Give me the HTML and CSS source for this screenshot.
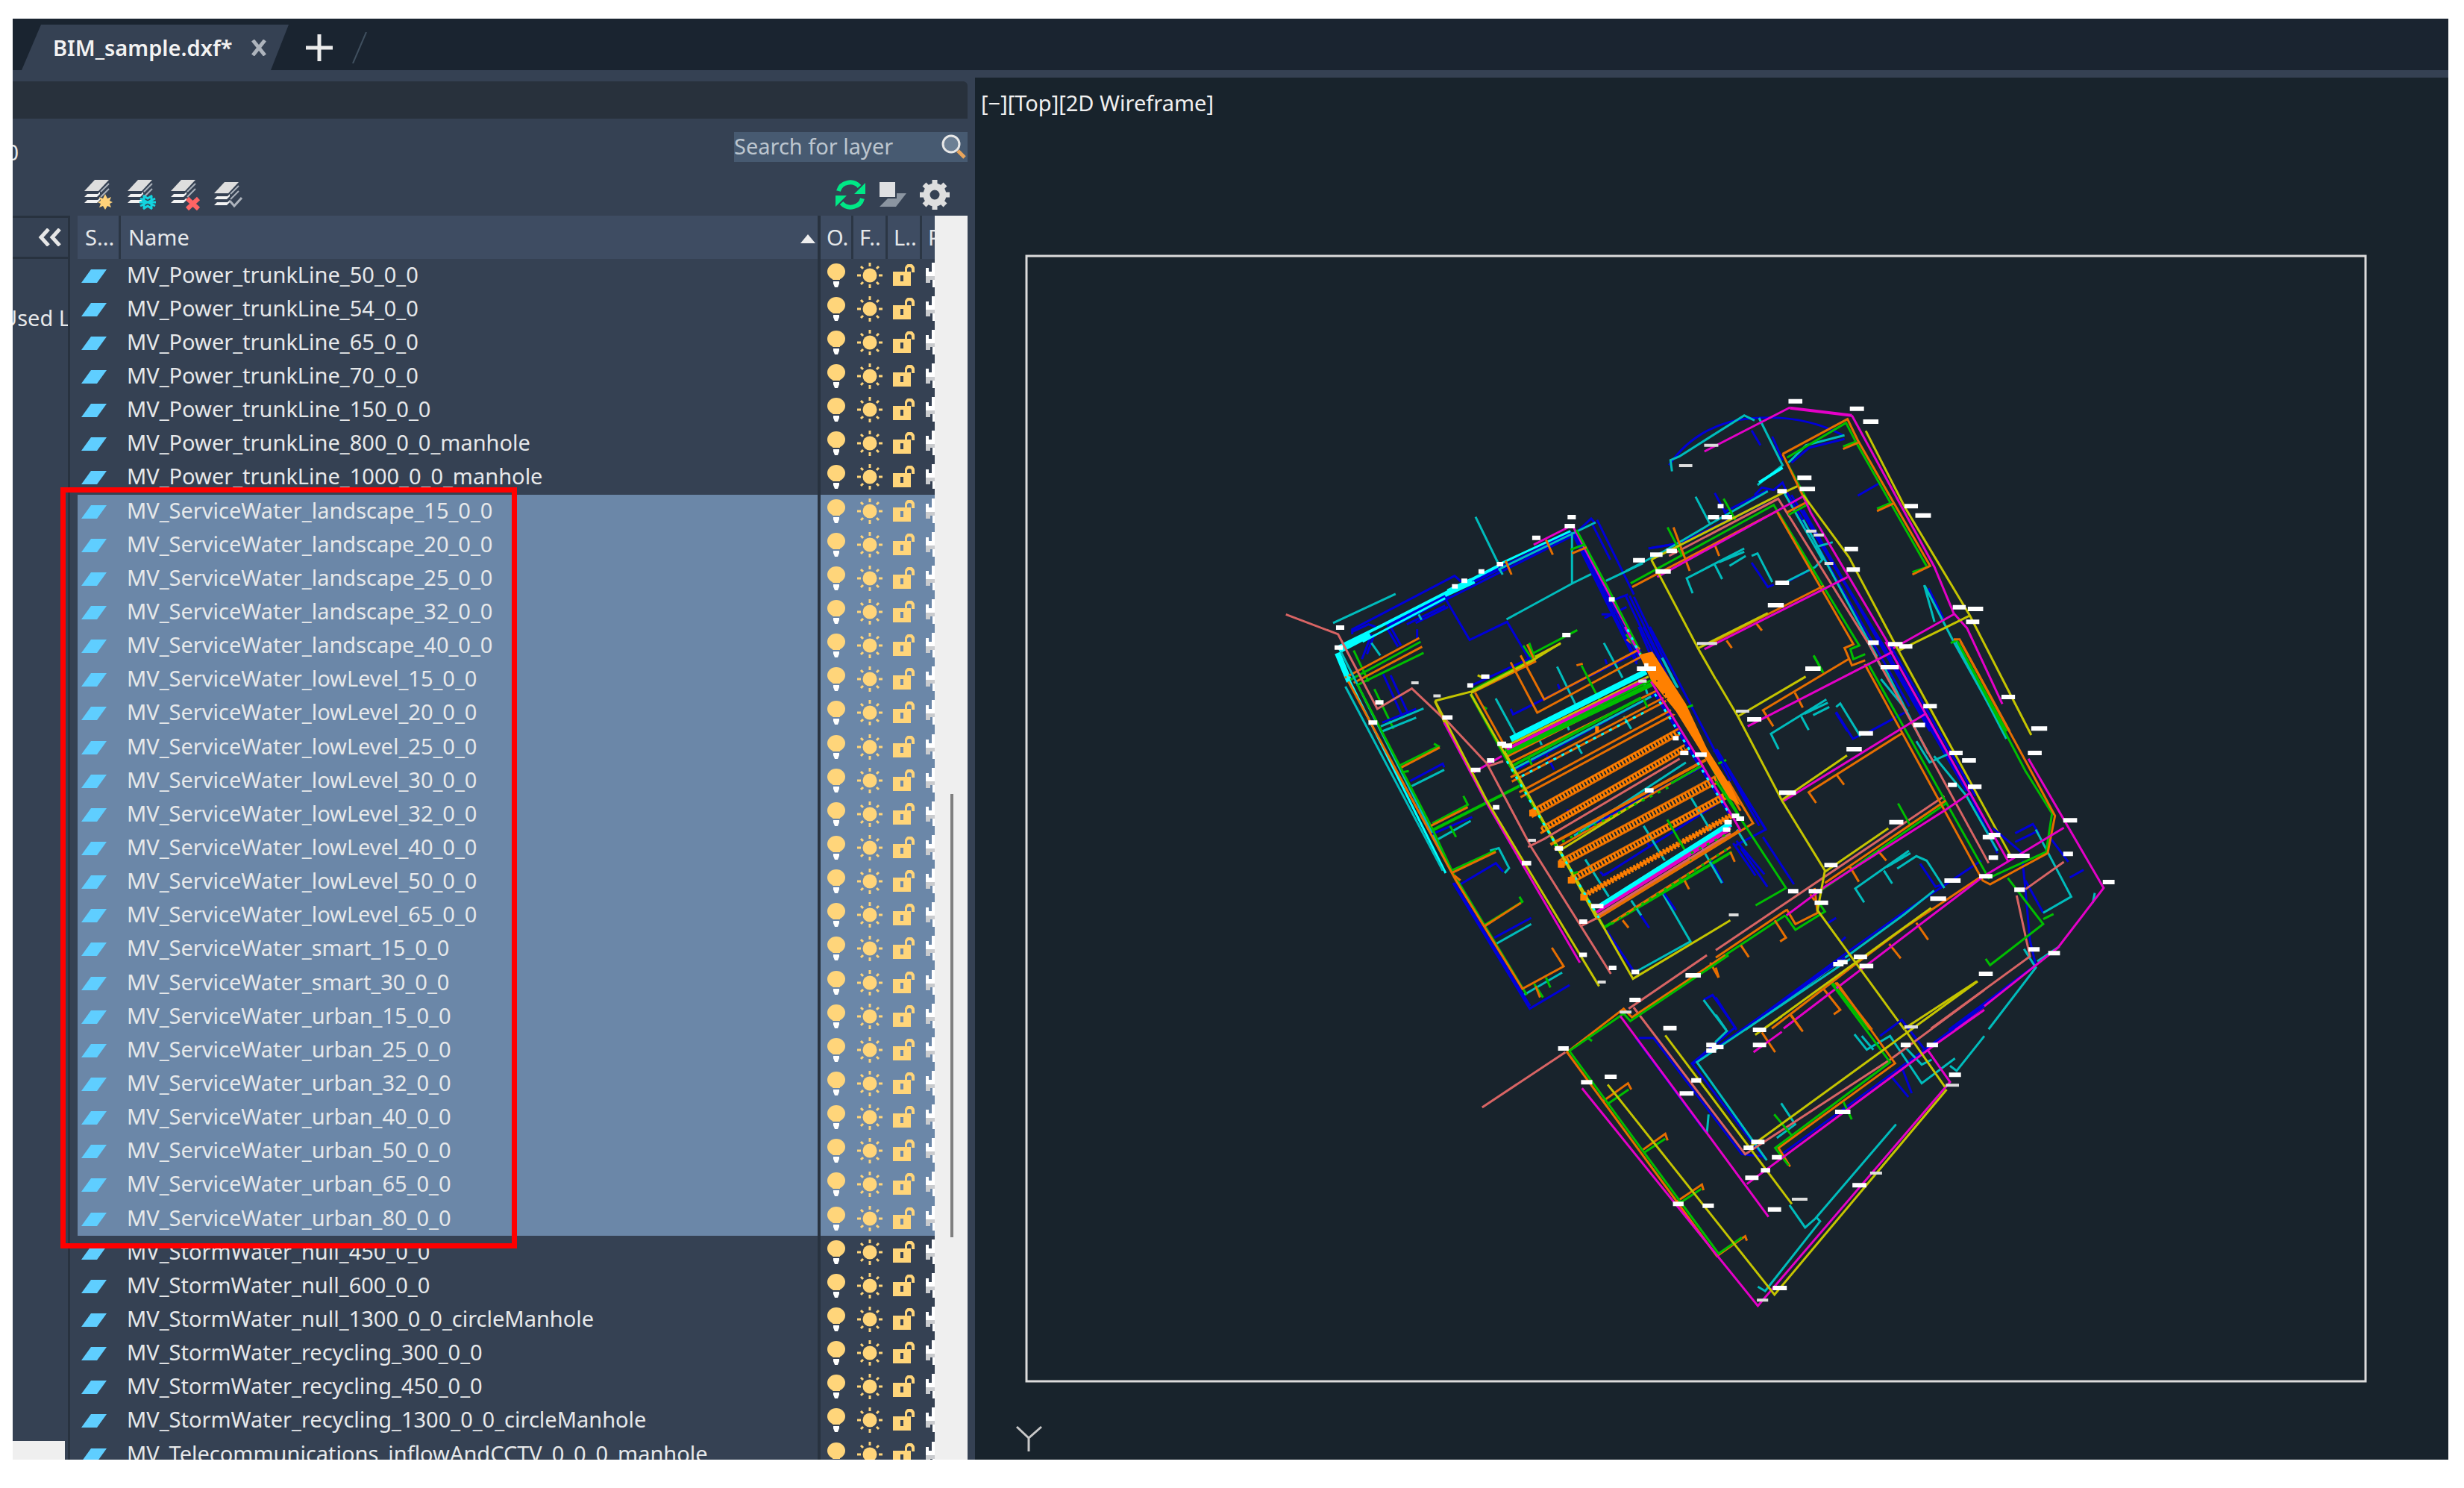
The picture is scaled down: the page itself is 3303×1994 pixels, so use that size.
FILE: index.html
```html
<!DOCTYPE html>
<html lang="en">
<head>
<meta charset="utf-8">
<title>BIM_sample.dxf</title>
<link rel="stylesheet" href="styles.css">
</head>
<body>
<svg class="sprite" aria-hidden="true">
  <symbol id="status" viewBox="0 0 34 18"><path d="M13 0H34L21 18H0Z" fill="#5fceff"/></symbol>
  <symbol id="bulb" viewBox="0 0 26 34"><path d="M8 20H18V23H8Z" fill="#ffd57a"/><ellipse cx="13" cy="12" rx="12" ry="11" fill="#ffd57a"/><path d="M9 25h8v3l-2 5h-4l-2-5Z" fill="#fff"/></symbol>
  <symbol id="sun" viewBox="0 0 34 34"><circle cx="17" cy="17" r="9.5" fill="#ffd57a"/><path d="M17 0v5M17 29v5M0 17h5M29 17h5M5 5l3 3M26 26l3 3M29 5l-3 3M8 26l-3 3" stroke="#ffd57a" stroke-width="3"/></symbol>
  <symbol id="lock" viewBox="0 0 29 30"><path d="M0 10H16V6a6 6 0 0 1 13 0v5h-4V7a3 3 0 0 0-6 0v3h5V29H0ZM10 15v8h4v-8Z" fill="#ffd57a" fill-rule="evenodd"/></symbol>
  <symbol id="plot" viewBox="0 0 34 34"><path d="M8 0H26V9H34V19H0V7H4V12H8Z" fill="#fff"/><path d="M0 18H34V27H28V23H6V27H0Z" fill="#c9cbce"/><path d="M9 23H25V33H9Z" fill="#fff"/></symbol>
  <symbol id="layers" viewBox="0 0 40 42"><path d="M14 1H33L19 16H0Z" fill="#dedede"/><path d="M4 20H18L21 17V20L17 24H0ZM4 28H18L21 25V28L17 32H0Z" fill="#f2f2f2"/><path d="M22 17 33 6M22 24 33 13" stroke="#aab1bb" stroke-width="2"/></symbol>
</svg>

<main class="app">
  <nav class="tabs">
    <div class="tab">
      <svg class="tab-shape" viewBox="0 0 358 61" preserveAspectRatio="none" aria-hidden="true"><path d="M26 0H358L334 61H0Z" fill="#354153"/></svg>
      <a href="#" class="tab-name">BIM_sample.dxf*</a>
      <button class="tab-close" aria-label="Close"><svg width="22" height="22"><path d="M3 1 19 21M19 1 3 21" stroke="#aeb4bd" stroke-width="5"/></svg></button>
    </div>
    <button class="tab-new" aria-label="New tab"><svg width="36" height="36"><path d="M18 0V36M0 18H36" stroke="#ececec" stroke-width="5"/></svg></button>
    <svg class="tab-end" width="20" height="42" aria-hidden="true"><path d="M19 0 1 42" stroke="#40505f" stroke-width="2"/></svg>
  </nav>

  <div class="work">
    <section class="palette">
      <header class="palette-title"></header>
      <div class="search-row">
        <span class="current">0</span>
        <label class="search"><input type="text" placeholder="Search for layer" aria-label="Search for layer">
          <svg width="34" height="34" aria-hidden="true"><circle cx="14" cy="13" r="11" fill="#6c7f94" stroke="#e8e8e8" stroke-width="3"/><path d="M23 22 32 31" stroke="#e9a55c" stroke-width="5"/></svg>
        </label>
      </div>
      <div class="tools">
        <button aria-label="New layer"><svg width="40" height="42"><use href="#layers"/><path d="M28 20l3 6 5-2-2 5 4 2-4 2 2 5-5-2-3 5-3-5-5 2 2-5-4-2 4-2-2-5 5 2Z" fill="#ffd27a"/></svg></button>
        <button aria-label="New frozen layer"><svg width="40" height="42"><use href="#layers"/><path d="M22 22V40M32 22V40M17 26 37 36M37 26 17 36M16 31H38M21 22 27 26 33 22M21 40 27 36 33 40" fill="none" stroke="#12d4e0" stroke-width="3"/></svg></button>
        <button aria-label="Delete layer"><svg width="40" height="42"><use href="#layers"/><path d="M22 26 37 40M37 26 22 40" stroke="#ff6464" stroke-width="6"/></svg></button>
        <button aria-label="Set current"><svg width="40" height="42"><g transform="translate(0 3)"><use href="#layers"/></g><path d="M21 29 27 36 37 25" fill="none" stroke="#aeb4bd" stroke-width="3"/></svg></button>
        <span class="spring"></span>
        <button aria-label="Refresh"><svg width="42" height="40"><path d="M5 15A16 15 0 0 1 33 9M37 25A16 15 0 0 1 9 31" fill="none" stroke="#00e886" stroke-width="6"/><path d="M41 4V19H26ZM1 36V21H16Z" fill="#00e886"/></svg></button>
        <button aria-label="Layer states"><svg width="36" height="40"><path d="M23 18H36L22 36H0L11 25H23Z" fill="#8b95a1"/><path d="M0 3H21V23H0Z" fill="#dfe0e2"/></svg></button>
        <button aria-label="Settings"><svg width="40" height="40"><circle cx="20" cy="20" r="11" fill="none" stroke="#dedede" stroke-width="9"/><path d="M20 0V8M20 32V40M0 20H8M32 20H40M6 6 11 11M29 29 34 34M34 6 29 11M11 29 6 34" stroke="#dedede" stroke-width="7"/></svg></button>
      </div>

      <div class="lists">
        <aside class="filters">
          <div class="filters-head"><button aria-label="Collapse"><svg width="32" height="24"><path d="M14 1 4 12 14 23M29 1 19 12 29 23" fill="none" stroke="#e6e6e6" stroke-width="5"/></svg></button></div>
          <div class="filters-body">Used L</div>
          <div class="filters-scroll"></div>
        </aside>
        <div class="layers">
          <table>
            <colgroup><col class="c-status"><col><col class="c-on"><col class="c-mid"><col class="c-mid"><col class="c-plot"></colgroup>
            <thead><tr><th>S...</th><th>Name<svg class="sort" width="20" height="12" aria-hidden="true"><path d="M10 0 20 12H0Z" fill="#eee"/></svg></th><th>O.</th><th>F..</th><th>L..</th><th>P</th></tr></thead>
            <tbody id="rows"></tbody>
          </table>
          <div class="callout"></div>
        </div>
        <div class="scrollbar"><div class="thumb"></div></div>
      </div>
    </section>

    <section class="viewport">
      <div class="view-label">[−][Top][2D Wireframe]</div>
      <svg class="drawing" viewBox="1307 104 1975 1852" preserveAspectRatio="xMinYMin meet" role="img" aria-label="Piping plan">
        <rect x="1376" y="343" width="1795" height="1508" fill="none" stroke="#dcdcdc" stroke-width="3"/>
        <path d="M1363 1912 1379 1927 1396 1912M1379 1927V1945" fill="none" stroke="#c8c8c8" stroke-width="3"/>

        <!-- north-west wing -->
        <g transform="translate(1700 500) scale(.3954 .3333)">
          <path class="b" d="M285 1050V1030L632 815 655 840M410 1000 1030 640M420 1020 1030 655M600 905 683 1073 810 1000 885 1150M500 1005 610 940M1045 640 1095 585 1110 605M1115 590 1240 890M1100 610 1160 750M1030 640 1250 1170M1045 650 1260 1150M1210 890 1310 1140M1225 895 1330 1150M1240 900 1385 1260M1165 915 1220 890M1130 970H1175M1140 985 1215 940M1290 705 1390 685M350 1050 318 1150M360 1050 335 1130M390 1210 455 1380M405 1030 440 1100M415 1020 450 1095M415 1215 475 1370M505 1030V1075M470 1010 600 935M285 1040 340 1010 365 1020"/>
          <path class="b w3" d="M400 1012 610 892"/>
          <path class="b w2" d="M600 895 1030 645M1035 640 1250 1160"/>
          <path class="c" d="M220 1005 432 888M703 578 780 765M1030 640V845M808 990 1035 843 1095 808M1145 835 1270 765M350 1085 380 1135M510 970 520 992M785 790 795 810M780 790 1110 600M1335 1145 1385 1260"/>
          <path class="cb w2" d="M240 1100 380 1018M380 1018 780 775M600 895 700 840"/>
          <path class="cb" d="M780 770 1025 635M320 1080 600 905"/>
          <path class="cb w3" d="M240 1115 345 1050M235 1125 275 1240M610 880 690 835"/>
          <path class="m" d="M900 690 1025 615M1035 620 1260 1120"/>
          <path class="g" d="M1045 630 1150 860 1258 1110M290 1115 340 1240M275 1235 517 1080M300 1255 527 1125M360 1270 425 1430M900 1125 1048 1033M865 1095 895 1150M885 1085 905 1150M690 1275 890 1155M1025 710 1070 690"/>
          <path class="o" d="M1030 725 1080 700M942 670 965 730M805 755 825 810M260 1225 512 1065M290 1245 522 1100M878 1090 905 1160 690 1285M1215 1070 1260 1110"/>
          <path class="b" d="M690 1255 890 1145"/>
          <path class="y" d="M905 1140 990 1088M565 1318 690 1280 905 1150M565 1318 600 1410M710 1215 730 1225"/>
          <path class="s" d="M60 970 237 1050 370 1350 487 1268 600 1395"/>
        </g>

        <!-- north-east wing -->
        <g transform="translate(2180 500) scale(.3954 .3333)">
          <path class="b" d="M145 370C220 240 330 190 420 182C540 170 640 190 735 250M560 360 620 300 740 265M425 230 455 290M495 255 530 350M435 490 460 460 500 470 530 440 545 480M540 470 960 1340M560 490 900 1150M600 550 1030 1440M640 650 1045 1440M300 482 340 570M75 705 175 685M425 762 480 860 500 850M330 560 480 470M855 445 785 493M1025 865 1075 985M710 1365 750 1440M190 680 470 520M545 840 640 780"/>
          <path class="c" d="M155 395 150 350 180 335 400 170 435 190M450 180 530 370 445 450M550 360 610 290 740 250M530 470 665 750 640 780 540 840M0 795 130 715 280 610 480 475M235 497 283 605M225 885 205 825 400 705M300 770 325 828M315 760 400 718M350 775 405 735M425 735 445 725 495 840M600 590 850 1140M640 700 700 680M1010 852 1045 1000M1012 855 1075 1000 1110 1080 1280 1440"/>
          <path class="cb w2" d="M530 380 450 440"/>
          <path class="s" d="M145 735 515 505 820 1085"/>
          <path class="g" d="M15 845 500 530 790 1095 760 1110 770 1150 810 1130M545 340 745 200 780 280 1020 780 970 800M780 275 735 295M900 520 850 545M540 350 620 525 550 570M330 505 370 590M140 620 190 735M635 1135 665 1200M1100 1085 1120 1075 1290 1440"/>
          <path class="o" d="M20 860 510 555 770 1090 740 1105 765 1175 810 1155M530 325 750 185 785 270 1030 775 970 810M785 280 735 305M905 525 850 555M530 325 610 520 545 560M160 620 215 795M300 690 315 735M280 1090 670 855M440 1005 460 1035M340 1075 358 1105M1110 1070H1130L1300 1440"/>
          <path class="m" d="M265 315 555 138M765 170 1045 780 1110 965 1155 1025 1275 1330M105 820 510 555 600 495 625 560 900 1110M265 1110 750 820M900 1110 1110 970"/>
          <path class="m w2" d="M555 140 765 170"/>
          <path class="y" d="M812 232 945 540 1165 975 1373 1455M1165 975 925 1115M85 750 525 485 580 455M600 490 755 740 925 1120 1303 1940M85 750 245 1110 303 1230M245 1105 480 965"/>
        </g>

        <!-- west wing and courtyard -->
        <g transform="translate(1760 860) scale(.3954 .3333)">
          <path class="cb" d="M80 50 130 170 450 930"/>
          <path class="c" d="M95 40 470 925M110 180 440 920M335 580 445 515M415 800 535 720M600 840 630 830 665 910 650 930M620 1215 740 1135M715 1420 845 1330M230 340 375 268M235 360 350 305M1180 1000 1280 1205 1090 1330"/>
          <path class="b" d="M475 970 735 1475 870 1380M330 560 440 490 445 505M400 775 540 705M500 975 620 890 645 925M615 1190 740 1110M995 1160 1085 1320M1190 1010 1230 1080M1100 1080 1140 1150M1350 880 1390 970M1370 435 1535 755 1430 820M235 325 350 270M980 940 1000 930"/>
          <path class="b w2" d="M478 970 735 1465"/>
          <path class="g" d="M150 170 400 740 475 930 725 1420M290 500 425 420 410 410M405 730 525 655 510 620M470 920 620 838M580 1140 710 1045 700 1025M750 1375 780 1430M790 1350 805 1390M300 525 325 520M465 740 485 785M575 260 590 270"/>
          <path class="g w2" d="M405 758 700 580M535 210 660 480 985 1145M985 1150 1420 845"/>
          <path class="o" d="M120 160 485 960M485 960 710 1395 850 1305 810 1230M300 505 430 425M470 930 620 845M400 740 525 665M580 1145 705 1050M480 940 500 960M755 1385 770 1430M550 205 660 440M1050 1120 1070 1150M1260 960 1275 995M1415 845 1430 885"/>
          <path class="m" d="M445 325 590 650 905 1290M545 525 640 460"/>
          <path class="s" d="M440 300 590 490 740 825 1010 1335M595 500 645 480M905 1145 965 1110"/>
          <path class="y" d="M415 240 590 640 970 1385M535 205 745 75 840 5M535 210 1085 1355 1415 1120"/>
        </g>

        <!-- central plant room -->
        <g transform="translate(2000 840) scale(.3333)">
          <path class="b" d="M75 330 85 352 600 95M265 230 272 250M455 130 462 150M450 1000 900 715M435 985 450 1000M90 578 660 270M300 735 310 740M220 515 250 575M625 870 632 880M590 0 690 240M610 0 720 230M635 0 960 620M890 500 905 495 1075 800M970 870 1060 1000M880 950 925 1030M340 830 850 560"/>
          <path class="b w2" d="M540 20 600 130M650 260 960 760"/>
          <path class="c" d="M262 160 335 310M450 65 525 205M15 288 95 435M330 840 780 545M610 800 695 940M375 935 470 1085M797 680 880 820M685 125 748 245M90 570 640 280M530 360 560 410M335 465 362 510M610 220 625 270M290 365 310 415M180 430 200 475M985 815 1025 880M845 890 925 1030M560 1100 600 1160"/>
          <path class="o" d="M75 142 182 345 600 120M115 115 210 292 590 92M340 155 365 148M60 522 645 225M70 548 660 258M75 605 690 285M80 622 700 298M110 665 720 335M115 685 735 350M155 740 750 410M160 765 755 432M200 805 775 475M195 830 790 490M250 895 850 555M270 940 900 600M275 965 910 625M315 1005 945 665M320 1030 950 685M420 1165 1000 815M480 1190 960 885M420 1175 1050 790 950 620M960 640 1020 740M865 520 1000 740"/>
          <path class="o w2" d="M235 875 860 535M360 1085 960 760"/>
          <path class="hatch" d="M155 752 745 422M200 818 775 487M275 952 905 612M320 1017 945 675M360 1085 960 760"/>
          <path class="g" d="M360 155 445 320M50 500 640 215M60 512 645 235M705 775 800 940M780 325 808 315M910 550 942 535M870 540 1000 770M540 30 600 110M610 290 625 325M145 520 160 555M320 995 345 985M720 630 840 560"/>
          <path class="g w2" d="M60 505 640 228M80 560 600 285"/>
          <path class="y" d="M60 478 630 200M280 895 610 690M50 500 420 1170M440 1130 960 810"/>
          <path class="cb w3" d="M75 452 620 180M435 1125 960 792"/>
          <path class="m w2" d="M60 492 620 212M420 1148 950 820"/>
          <path class="m" d="M535 0 600 120M640 220 830 530 960 750 1000 820M430 1140 960 806"/>
          <path class="s" d="M215 850 755 530M425 1160 960 830M145 885 215 850"/>
          <path class="cb dots" d="M545 10 600 120M655 270 960 760M60 540 430 1170M120 600 610 345"/>
          <path class="g dots" d="M480 1195 960 885M800 910 960 825M250 880 720 640"/>
          <path fill="#ff8000" d="M592 112 645 100 780 310 865 490 960 640 1000 720 955 690 840 500 740 340 640 215Z"/>
          <path fill="#ff8000" d="M150 735H178V762H150ZM265 940H292V968H265ZM305 1005H335V1032H305ZM355 1078H380V1100H355ZM415 400H430V425H415Z"/>
          <path fill="#18232c" d="M660 215h6v5h-6ZM690 268h6v5h-6ZM700 285h5v6h-5ZM720 320h5v6h-5ZM730 345h5v6h-5ZM745 365h5v6h-5ZM760 390h5v6h-5ZM785 420h5v6h-5ZM805 450h5v6h-5Z"/>
        </g>

        <!-- east wing -->
        <g transform="translate(2300 860) scale(.3954 .3333)">
          <path class="b" d="M0 435 170 755M160 785 265 975M85 830 175 985M70 800 165 935M560 0 860 610 955 850M585 0 880 620M600 90 850 600M408 282 465 390 490 375M520 362 640 285M693 892 745 985 770 975M1040 880 1050 1000 1065 1200 1085 1300 790 1560M940 750 1050 860M1015 770 1075 733 1095 770M1015 805 1085 765M1135 790 1195 885M1200 948 1247 917M1050 960 1110 1090M900 880 780 975 640 1085 450 1245 90 1560M375 1135 408 1110M420 1210 440 1187M0 1430 70 1560"/>
          <path class="c" d="M213 432 187 370 375 232M290 300 315 355M300 290 380 245M330 295 385 262M408 262 422 248 490 380M503 1048 473 992 655 840M570 920 598 972M580 905 660 850M615 912 680 862 715 880 775 990M560 150 650 280M575 110 720 450M680 400 725 485 800 445M740 460 850 620 955 840M815 0 985 390M1085 755 1205 1025 1110 1090M1045 1235 1085 1310 925 1558M1090 1285 1165 1225M1285 1010 1278 1050M740 1000 640 1095 450 1260 100 1560M0 1500 35 1560M515 0 560 100"/>
          <path class="s" d="M515 0 925 890M775 620 350 960 0 1240M1020 1020 1065 1265 730 1555M1050 995 1180 885"/>
          <path class="g" d="M515 85 925 950 1120 845 1140 690 1050 520 820 0M0 560 100 740 238 990 135 1060M780 650 350 1005M235 1100 270 1158 370 1085 350 1050M235 1100 0 1285M618 650 660 740M333 58 365 125M990 950 1110 1135 930 1300 915 1275M1110 1115 1145 1095M395 1370 520 1560"/>
          <path class="o" d="M505 90 905 960 930 975 1125 850 1150 700 1055 490 830 0M195 340 160 275 450 70M268 205 295 265M340 648 315 605 635 365M410 535 435 575M780 638 370 970M240 1078 0 1270M240 1075 270 1135 345 1090 335 990M320 1015 335 1040M455 905 485 965M550 840 578 880M200 1120 238 1190 218 1205M85 1220 112 1268M680 1130 720 1198M588 1215 627 1273M365 1395 422 1480 400 1498M250 1495 290 1560M905 940 640 1150 480 1290 190 1555M405 1370 530 1560M0 1310 10 1350"/>
          <path class="m" d="M108 340 600 40M575 0 990 880M230 640 710 290M780 675 370 985 240 1100M1180 748 905 945 230 1555M860 610 780 675M1060 470 1315 990 1160 1230 810 1560"/>
          <path class="y" d="M0 150 75 300 225 640 370 920 345 1080 640 1560M75 300 305 140M225 635 445 457M585 750 370 925M730 1070 165 1555M885 1365 640 1555"/>
        </g>

        <!-- south block -->
        <g transform="translate(1960 1280) scale(.4464 .3333)">
          <path class="b" d="M520 330 730 710M530 333H575L840 800 910 810M725 180 752 160 820 290 690 435 910 820M1150 10 690 440M1568 205 960 800M1255 325 1320 260 1395 390M1320 450 1350 555M1290 490 1340 570"/>
          <path class="c" d="M725 180 795 305 760 350M1165 15 705 430 915 825M740 640 735 715M983 1005 1030 1095 1060 1060 1303 680M1065 1055 1075 1070 910 1350 888 1333M958 595 1000 680 945 735M1178 318 1215 380 1285 325 1380 515 1480 415M1568 325 1485 465 1465 445M1200 325 1235 380M1330 370 1380 440 1410 420"/>
          <path class="s" d="M60 612 310 390M735 0 500 215M515 210 850 800 1285 420 1568 140"/>
          <path class="o" d="M790 0 510 250 485 215 315 390 765 1210 850 1130 855 1148M425 585 498 515 508 540M540 785 610 718 617 745M645 990 720 922 725 945M745 30 770 90M900 310 940 390M985 235 1023 307M1125 110 1300 435 950 775 985 850"/>
          <path class="g" d="M800 0 505 265 485 235 322 385 770 1200 840 1135M435 600 500 540M545 795 610 738M655 995 718 940M375 330 390 345M1110 115 1285 430 940 775 980 845M937 640 990 725M1145 590 1170 660"/>
          <path class="m" d="M360 535 888 1410 1465 510 1400 385M475 245 735 715 920 1052M875 390 960 308M855 920 1410 370 1568 220"/>
          <path class="y" d="M437 520 938 1365 1455 540M610 322 990 1000M860 775 1548 105M1330 300 1450 530M880 320 960 245"/>
        </g>

        <!-- pipe tags -->
        <g transform="translate(1700 500) scale(.3954 .3333)"><path class="t" d="M1015 579h28M1005 615h35M895 662h28M775 768h22M713 797h20M655 835h20M623 857h20M230 1023h28M225 1103h28M363 1324h28M590 1385h35M675 1256h20M722 1220h28M997 1053h28M1155 910h20M1237 752h40M1295 730h42M1350 715h36M1313 797h52M1250 1188h65M1275 1175h14M340 1405h30"/><path class="t thin" d="M485 1245h25M560 1298h25M1255 1238h28M1478 290h48M1393 372h45"/></g>
        <g transform="translate(2180 500) scale(.3954 .3333)"><path class="t" d="M550 113h47M758 143h48M803 195h52M580 421h48M588 466h52M512 475h32M310 535h20M277 579h38M323 579h36M943 535h46M980 572h53M740 707h46M747 790h45M505 843h47M480 933h54M1107 941h44M1158 948h52M1152 1000h45M820 1084h36M887 1090h50M925 1099h45M607 1188h52M862 1182h62M1272 1302h46M1007 1339h46M410 1392h48M973 1415h40M1373 1429h54"/><path class="t thin" d="M610 635h35M635 651h35M672 765h30M240 1087h68M372 1359h45"/></g>
        <g transform="translate(1760 860) scale(.3954 .3333)"><path class="t" d="M625 410h30M640 418h35M590 477h25M535 515h33M610 665h22M708 890h32M903 1125h27M903 1259h26M1003 1311h26M943 1063h42M820 831h28M1125 598h30M1245 447h28M1295 454h40M1220 388h20M1420 700h25M1395 725h25M1390 755h25M1435 711h27M1080 1328h26M1263 1341h52M1073 1440h38"/><path class="t thin" d="M730 798h26M965 1368h28M1040 1489h40M1410 1098h33"/></g>
        <g transform="translate(2300 860) scale(.3954 .3333)"><path class="t" d="M443 432h52M485 368h48M792 447h45M835 477h47M787 575h30M855 583h46M215 607h57M588 725h48M1058 447h47M1178 718h47M1178 853h33M1312 966h40M925 777h40M905 785h40M988 861h76M925 868h32M893 943h45M368 898h45M245 1003h35M315 1003h45M335 1049h46M775 960h55M727 1033h54M1012 997h36M1060 1237h38M1127 1252h40M892 1335h47M468 1267h45M398 1296h35M412 1288h35M487 1304h47"/><path class="t thin" d="M640 1549h45"/></g>
        <g transform="translate(1960 1280) scale(.4464 .3333)"><path class="t" d="M288 375h32M428 489h36M357 511h34M604 293h40M688 503h30M653 556h42M873 300h40M873 361h40M733 361h30M750 369h35M733 383h30M868 751h40M845 774h30M930 812h30M897 865h28M850 895h40M918 1022h40M722 1007h34M633 1000h32M1120 630h46M1462 481h36M1172 925h42M933 1338h42M1317 361h30M1395 361h34"/><path class="t thin" d="M990 981h47M1452 523h40M1225 876h36M885 1387h34M1328 288h40"/></g>
      </svg>
    </section>
  </div>
</main>
<script src="layers.js"></script>
</body>
</html>
```

FILE: layers.js
```js
const groups = [
  ["MV_Power_trunkLine_", ["50_0_0", "54_0_0", "65_0_0", "70_0_0", "150_0_0", "800_0_0_manhole", "1000_0_0_manhole"]],
  ["MV_ServiceWater_landscape_", ["15_0_0", "20_0_0", "25_0_0", "32_0_0", "40_0_0"], true],
  ["MV_ServiceWater_lowLevel_", ["15_0_0", "20_0_0", "25_0_0", "30_0_0", "32_0_0", "40_0_0", "50_0_0", "65_0_0"], true],
  ["MV_ServiceWater_smart_", ["15_0_0", "30_0_0"], true],
  ["MV_ServiceWater_urban_", ["15_0_0", "25_0_0", "32_0_0", "40_0_0", "50_0_0", "65_0_0", "80_0_0"], true],
  ["MV_StormWater_null_", ["450_0_0", "600_0_0", "1300_0_0_circleManhole"]],
  ["MV_StormWater_recycling_", ["300_0_0", "450_0_0", "1300_0_0_circleManhole"]],
  ["MV_Telecommunications_", ["inflowAndCCTV_0_0_0_manhole"]],
];

const icon = (name, w, h) =>
  `<td class="${name}"><svg width="${w}" height="${h}" aria-hidden="true"><use href="#${name}"/></svg></td>`;

document.getElementById("rows").innerHTML = groups
  .flatMap(([prefix, sizes, selected]) =>
    sizes.map((size) =>
      `<tr${selected ? ' class="selected"' : ""}>${icon("status", 34, 18)}<td class="name">${prefix}${size}</td>` +
      icon("bulb", 26, 34) + icon("sun", 34, 34) + icon("lock", 29, 30) + icon("plot", 34, 34) + "</tr>"))
  .join("");
```

FILE: styles.css
```css
* { box-sizing: border-box; }

body {
  margin: 0;
  height: 100vh;
  padding: 25px 21px 38px 17px;
  background: #fff;
  color: #e6e8ea;
  font: 29px/40px "Noto Sans", sans-serif;
}

button { padding: 0; border: 0; background: none; display: block; }
svg { display: block; }
.sprite { position: absolute; width: 0; height: 0; }

.app {
  height: 100%;
  display: flex;
  flex-direction: column;
  overflow: hidden;
  background: #354153;
}

.tabs {
  flex: none;
  height: 69px;
  display: flex;
  align-items: center;
  padding: 8px 0 0 12px;
  background: #1a2430;
}
.tab {
  position: relative;
  width: 358px;
  height: 61px;
  display: flex;
  align-items: center;
  justify-content: space-between;
  padding: 0 29px 0 42px;
  margin-right: 23px;
}
.tab-shape { position: absolute; inset: 0; width: 100%; height: 100%; }
.tab-name { position: relative; color: #f2f2f2; font-weight: 600; text-decoration: none; }
.tab-close { position: relative; }
.tab-end { margin-left: 26px; }

.work {
  flex: 1;
  min-height: 0;
  display: grid;
  grid-template-columns: 1290px 1fr;
  padding-top: 10px;
}

.palette { min-height: 0; display: flex; flex-direction: column; padding: 5px 10px 0 0; }
.palette-title { flex: none; height: 50px; background: #28313c; border-radius: 0 6px 0 0; }
.search-row {
  flex: none;
  display: flex;
  justify-content: space-between;
  align-items: center;
  height: 76px;
  overflow: hidden;
}
.current { width: 8px; direction: rtl; overflow: hidden; padding-top: 14px; }
.search {
  display: flex;
  align-items: center;
  width: 313px;
  height: 40px;
  padding-right: 2px;
  background: #475a71;
}
.search input {
  flex: 1;
  min-width: 0;
  height: 40px;
  padding: 0 0 3px;
  border: 0;
  background: none;
  color: inherit;
  font: inherit;
}
.search input::placeholder { color: #bdc6cf; opacity: 1; }

.tools {
  flex: none;
  height: 54px;
  display: flex;
  align-items: center;
  gap: 18px;
  padding: 0 24px 2px 96px;
}
.spring { flex: 1; }

.lists { flex: 1; min-height: 0; display: flex; overflow: hidden; }
.filters {
  width: 77px;
  margin-right: 10px;
  display: flex;
  flex-direction: column;
  border-right: 3px solid #28323f;
}
.filters-head {
  flex: none;
  height: 58px;
  display: flex;
  align-items: center;
  justify-content: flex-end;
  padding-right: 8px;
  border-top: 3px solid #28323f;
  border-bottom: 3px solid #28323f;
}
.filters-body { flex: 1; padding-top: 59px; text-indent: -15px; white-space: nowrap; overflow: hidden; }
.filters-scroll { height: 25px; width: 70px; background: #efefef; }

.layers { position: relative; flex: 1; min-width: 0; height: 100%; }
table { width: 100%; table-layout: fixed; border-spacing: 0; }
.c-status { width: 58px; }
.c-on { width: 44px; }
.c-mid { width: 46px; }
.c-plot { width: 17px; }
th {
  height: 58px;
  padding: 0 0 0 10px;
  overflow: hidden;
  background: #3e4c62;
  border-right: 3px solid #2b3644;
  font-weight: 400;
  text-align: left;
  white-space: nowrap;
}
th:nth-child(2) { position: relative; }
th:nth-child(n+3) { padding-left: 8px; }
th:last-child { border-right: 0; }
.sort { position: absolute; right: 3px; top: 25px; }

tbody tr { height: 45px; }
tbody tr:nth-child(7n) { height: 46px; }
td { padding: 0; overflow: hidden; white-space: nowrap; }
td svg { margin: 0 auto; }
.status svg { margin: 0 0 0 5px; }
.bulb { padding-right: 2px; }
.sun, .lock { padding-right: 3px; }
.plot svg { margin: 0 0 0 5px; }
td.name { padding: 0 0 4px 8px; }
th:nth-child(2), td.name { border-right: 4px solid #28323f; }
.bulb, .sun, .lock, .plot { padding-bottom: 2px; }
.selected { background: #6b87a8; }

.callout {
  position: absolute;
  left: -23px;
  top: 364px;
  width: 612px;
  height: 1020px;
  border: 7px solid #f00;
}

.scrollbar { width: 44px; padding-top: 775px; background: #efefef; }
.thumb { width: 4px; height: 594px; margin-left: 21px; background: #7f7f7f; }

.viewport { position: relative; min-width: 0; min-height: 0; background: #18232c; }
.view-label { position: absolute; left: 8px; top: 14px; color: #f0f0f0; }
.drawing { width: 100%; height: 100%; }
.drawing path { vector-effect: non-scaling-stroke; }

.c, .cb, .y, .o, .g, .b, .m, .s, .t, .hatch { fill: none; stroke-width: 3px; }
.c { stroke: #00bcbc; }
.cb { stroke: #00ffff; }
.y { stroke: #c4c400; }
.o { stroke: #e66e00; }
.g { stroke: #00be00; }
.b { stroke: #0000d8; }
.m { stroke: #e400c8; }
.s { stroke: #d86464; }
.hatch { stroke: #ff8000; stroke-width: 8px; stroke-dasharray: 3px 2px; }
.dots { stroke-dasharray: 4px 8px; }
.w2 { stroke-width: 4px; }
.w3 { stroke-width: 8px; }
.t { stroke: #fff; stroke-width: 6px; }
.thin { stroke: #ddd; stroke-width: 4px; }
```
